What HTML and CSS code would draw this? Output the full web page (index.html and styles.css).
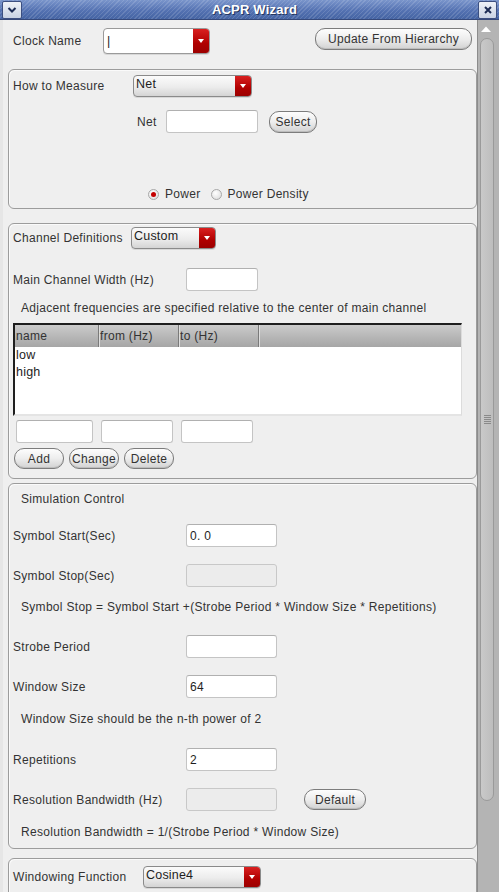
FILE: index.html
```html
<!DOCTYPE html>
<html>
<head>
<meta charset="utf-8">
<title>ACPR Wizard</title>
<link rel="stylesheet" href="styles.css">
</head>
<body>
<div class="window">
  <div class="titlebar">
    <div class="tb-btn tb-menu">
      <svg width="10" height="8" viewBox="0 0 10 8"><path d="M1.5 2 L5 5.5 L8.5 2" fill="none" stroke="#1c2c55" stroke-width="2"/></svg>
    </div>
    <div class="title">ACPR Wizard</div>
    <div class="tb-btn tb-close">
      <svg width="10" height="10" viewBox="0 0 10 10"><path d="M2 2 L8 8 M8 2 L2 8" fill="none" stroke="#1c2c55" stroke-width="2"/></svg>
    </div>
  </div>
  <div class="main">
    <div class="content">
      <div class="top-row">
        <span class="lbl w-clock">Clock Name</span>
        <div class="combo combo-white w-clockcombo"><span class="val cursor">|</span><span class="drop"></span></div>
        <button class="btn btn-update">Update From Hierarchy</button>
      </div>

      <section class="panel p1">
        <div class="row">
          <span class="lbl w-how">How to Measure</span>
          <div class="combo w-net"><span class="val">Net</span><span class="drop"></span></div>
        </div>
        <div class="row r-net">
          <span class="lbl w-netlbl">Net</span>
          <div class="input w-netin"></div>
          <button class="btn btn-select">Select</button>
        </div>
        <div class="row r-radio">
          <span class="radio on"></span><span class="rlbl">Power</span>
          <span class="radio"></span><span class="rlbl">Power Density</span>
        </div>
      </section>

      <section class="panel p2">
        <div class="row">
          <span class="lbl w-chan">Channel Definitions</span>
          <div class="combo w-custom"><span class="val">Custom</span><span class="drop"></span></div>
        </div>
        <div class="row r-main">
          <span class="lbl w-main">Main Channel Width (Hz)</span>
          <div class="input w-mainin"></div>
        </div>
        <div class="note n-adj">Adjacent frequencies are specified relative to the center of main channel</div>
        <div class="table">
          <div class="thead">
            <span class="th c1">name</span><span class="th c2">from (Hz)</span><span class="th c3">to (Hz)</span><span class="th c4"></span>
          </div>
          <div class="tbody">
            <div class="tr">low</div>
            <div class="tr">high</div>
          </div>
        </div>
        <div class="row r-ins">
          <div class="input w-i1"></div>
          <div class="input w-i2"></div>
          <div class="input w-i3"></div>
        </div>
        <div class="row r-btns">
          <button class="btn btn-small">Add</button>
          <button class="btn btn-small">Change</button>
          <button class="btn btn-small">Delete</button>
        </div>
      </section>

      <section class="panel p3">
        <div class="heading">Simulation Control</div>
        <div class="row frow m17a">
          <span class="lbl w-form">Symbol Start(Sec)</span>
          <div class="input w-form-in"><span class="ival">0. 0</span></div>
        </div>
        <div class="row frow m17">
          <span class="lbl w-form">Symbol Stop(Sec)</span>
          <div class="input disabled w-form-in"></div>
        </div>
        <div class="note m13">Symbol Stop = Symbol Start +(Strobe Period * Window Size * Repetitions)</div>
        <div class="row frow m20">
          <span class="lbl w-form">Strobe Period</span>
          <div class="input w-form-in"></div>
        </div>
        <div class="row frow m17">
          <span class="lbl w-form">Window Size</span>
          <div class="input w-form-in"><span class="ival">64</span></div>
        </div>
        <div class="note m14">Window Size should be the n-th power of 2</div>
        <div class="row frow m21">
          <span class="lbl w-form">Repetitions</span>
          <div class="input w-form-in"><span class="ival">2</span></div>
        </div>
        <div class="row frow m17">
          <span class="lbl w-form">Resolution Bandwidth (Hz)</span>
          <div class="input disabled w-form-in"></div>
          <button class="btn btn-default">Default</button>
        </div>
        <div class="note m14">Resolution Bandwidth = 1/(Strobe Period * Window Size)</div>
      </section>

      <section class="panel p4">
        <div class="row">
          <span class="lbl w-win">Windowing Function</span>
          <div class="combo w-cos"><span class="val">Cosine4</span><span class="drop"></span></div>
        </div>
      </section>
    </div>
    <div class="scrollbar">
      <div class="sb-up">
        <svg width="12" height="8" viewBox="0 0 12 8"><path d="M1 7 L6 1.5 L11 7 Z" fill="#ffffff"/></svg>
      </div>
      <div class="sb-track">
        <div class="sb-thumb">
          <span class="grip"></span>
        </div>
      </div>
    </div>
  </div>
</div>
</body>
</html>
```

FILE: styles.css
```css
* { box-sizing: border-box; }
html, body {
  margin: 0;
  padding: 0;
  background: #efefef;
}
body {
  font-family: "Liberation Sans", Arial, sans-serif;
  font-size: 12px;
  letter-spacing: 0.3px;
  color: #333333;
  width: 499px;
  height: 892px;
  overflow: hidden;
}
.window {
  width: 499px;
  height: 892px;
  display: flex;
  flex-direction: column;
}

/* Title bar */
.titlebar {
  height: 20px;
  flex: none;
  display: flex;
  align-items: center;
  border-bottom: 1px solid #36497a;
  background:
    repeating-linear-gradient(135deg, rgba(255,255,255,0.13) 0 1px, rgba(255,255,255,0) 1px 3px),
    linear-gradient(#7a95cb, #5472b2 55%, #4564a3);
  position: relative;
}
.title {
  flex: 1;
  text-align: center;
  color: #fff;
  font-weight: bold;
  font-size: 13px;
  letter-spacing: 0.2px;
  text-shadow: 1px 1px 0 #243660;
  padding-left: 9px;
}
.tb-btn {
  width: 20px;
  height: 18px;
  border: 1px solid #3c4f80;
  border-radius: 2px;
  background: linear-gradient(#eef2f8, #c9d3e4);
  display: flex;
  align-items: center;
  justify-content: center;
  flex: none;
}
.tb-menu { margin-left: 2px; }
.tb-close { width: 19px; margin-right: 2px; }

/* main */
.main {
  flex: 1;
  display: flex;
  overflow: hidden;
}
.content {
  width: 477px;
  flex: none;
  padding-left: 8px;
  overflow: hidden;
  background: linear-gradient(90deg, #e6e6e6 0 3px, #efefef 3px);
}

.row {
  display: flex;
  align-items: center;
}
.lbl { flex: none; white-space: nowrap; }

.top-row {
  height: 49px;
  display: flex;
  align-items: flex-start;
  padding-top: 8px;
}
.top-row .lbl { margin-left: 5px; width: 90px; line-height: 26px; }

/* combos */
.combo {
  display: flex;
  height: 22px;
  border: 1px solid #8a8a8a;
  border-radius: 4px;
  background: linear-gradient(#fbfbfb, #ececec 55%, #d4d4d4);
  overflow: hidden;
  flex: none;
  box-shadow: 0 1px 0 #d8d8d8;
}
.combo .val {
  flex: 1;
  padding-left: 2px;
  line-height: 17px;
  font-size: 12.5px;
  color: #1e1e1e;
  letter-spacing: 0.2px;
}
.combo .drop {
  width: 16px;
  flex: none;
  background: linear-gradient(#d92020, #b00000 60%, #9c0000);
  position: relative;
}
.combo .drop::after {
  content: "";
  position: absolute;
  left: 5px;
  top: 8px;
  border-left: 3px solid transparent;
  border-right: 3px solid transparent;
  border-top: 4px solid #fff;
}
.combo-white {
  height: 26px;
  background: #fff;
  border-color: #9a9a9a;
}
.combo-white .val { line-height: 24px; padding-left: 3px; }
.combo-white .drop::after { top: 10px; }
.cursor { font-size: 14px; color: #000; }
.w-clockcombo { width: 107px; }
.w-net { width: 119px; }
.w-custom { width: 85px; }
.w-cos { width: 118px; }

/* buttons */
.btn {
  font-family: "Liberation Sans", Arial, sans-serif;
  font-size: 12px;
  color: #333333;
  border: 1px solid #7c7c7c;
  border-radius: 10px;
  background: linear-gradient(#fdfdfd, #ededed 50%, #d2d2d2);
  padding: 0;
  height: 21px;
  flex: none;
  letter-spacing: 0.3px;
  box-shadow: inset 0 -1px 0 #bdbdbd;
}
.btn-update {
  width: 157px;
  height: 22px;
  margin-left: auto;
  margin-right: 5px;
}
.btn-select { width: 48px; height: 22px; margin-left: 11px; }
.btn-small { width: 50px; margin-right: 5px; }
.btn-default { width: 62px; margin-left: 27px; height: 21px; }

/* inputs */
.input {
  height: 23px;
  background: #fff;
  border: 1px solid #c4c4c4;
  border-top-color: #b0b0b0;
  border-radius: 3px;
  flex: none;
  display: flex;
  align-items: center;
}
.input.disabled { background: #ececec; border-color: #c8c8c8; }
.ival { padding-left: 3px; font-size: 12px; color: #1e1e1e; }

/* panels */
.panel {
  width: 469px;
  border: 1px solid #9c9c9c;
  border-radius: 6px;
  box-shadow: inset 1px 1px 0 #fafafa;
  padding-left: 4px;
  display: flex;
  flex-direction: column;
  flex: none;
}
.p1 { height: 140px; padding-top: 5px; }
.w-how { width: 120px; }
.r-net { margin-top: 13px; }
.w-netlbl { margin-left: 124px; width: 29px; }
.w-netin { width: 92px; }
.r-radio { margin-top: 54px; height: 14px; padding-left: 135px; }
.radio {
  width: 11px;
  height: 11px;
  border-radius: 50%;
  border: 1px solid #a8a8a8;
  background: radial-gradient(circle at 40% 35%, #ffffff, #d8d8d8);
  flex: none;
  position: relative;
}
.radio.on::after {
  content: "";
  position: absolute;
  left: 2px;
  top: 2px;
  width: 5px;
  height: 5px;
  border-radius: 50%;
  background: #c40000;
}
.rlbl { margin-left: 6px; margin-right: 10px; }

.p2 { height: 256px; margin-top: 14px; padding-top: 3px; }
.w-chan { width: 118px; }
.r-main { margin-top: 19px; }
.w-main { width: 173px; }
.w-mainin { width: 72px; }
.note {
  height: 15px;
  line-height: 15px;
  padding-left: 8px;
  white-space: nowrap;
}
.n-adj { margin-top: 10px; }

.table {
  margin-top: 7px;
  width: 449px;
  height: 93px;
  border-left: 2px solid #1e1e1e;
  border-top: 2px solid #1e1e1e;
  border-right: 1px solid #dcdcdc;
  border-bottom: 2px solid #e4e4e4;
  background: #fff;
  display: flex;
  flex-direction: column;
}
.thead {
  height: 22px;
  display: flex;
  background: linear-gradient(#cbcbcb, #b4b4b4 60%, #a6a6a6);
  flex: none;
}
.th {
  line-height: 22px;
  padding-left: 1px;
  border-right: 1px solid #7a7a7a;
  box-shadow: 1px 0 0 #dedede;
  color: #333333;
  overflow: hidden;
  white-space: nowrap;
}
.c1 { width: 84px; }
.c2 { width: 80px; }
.c3 { width: 80px; }
.c4 { flex: 1; border-right: none; box-shadow: none; }
.tbody { padding-top: 0; }
.tr { height: 17px; line-height: 17px; padding-left: 1px; color: #1e1e1e; font-size: 12.5px; letter-spacing: 0.2px; }

.r-ins { margin-top: 4px; padding-left: 3px; }
.w-i1 { width: 77px; margin-right: 8px; }
.w-i2 { width: 72px; margin-right: 8px; }
.w-i3 { width: 72px; }
.r-btns { margin-top: 5px; padding-left: 1px; }

.p3 { height: 366px; margin-top: 4px; }
.heading { height: 15px; line-height: 15px; margin-top: 8px; padding-left: 8px; }
.frow { height: 23px; }
.w-form { width: 173px; }
.w-form-in { width: 91px; }
.m17a { margin-top: 17px; }
.m17 { margin-top: 17px; }
.m13 { margin-top: 13px; }
.m20 { margin-top: 20px; }
.m14 { margin-top: 14px; }
.m21 { margin-top: 21px; }

.p4 { height: 60px; margin-top: 9px; padding-top: 7px; }
.w-win { width: 130px; }

/* scrollbar */
.scrollbar {
  width: 22px;
  flex: none;
  border-left: 1px solid #8c8c8c;
  background: #b4b4b4;
  display: flex;
  flex-direction: column;
}
.sb-up {
  height: 18px;
  display: flex;
  align-items: center;
  justify-content: center;
  padding-right: 5px;
  flex: none;
}
.sb-track { flex: 1; position: relative; }
.sb-thumb {
  margin-left: 2px;
  width: 14px;
  height: 763px;
  border: 1px solid #9a9a9a;
  border-radius: 7px;
  background: linear-gradient(90deg, #c9c9c9, #bdbdbd);
  display: flex;
  align-items: center;
  justify-content: center;
}
.grip {
  width: 7px;
  height: 9px;
  background: repeating-linear-gradient(#8a8a8a 0 1px, transparent 1px 2px);
}
```
